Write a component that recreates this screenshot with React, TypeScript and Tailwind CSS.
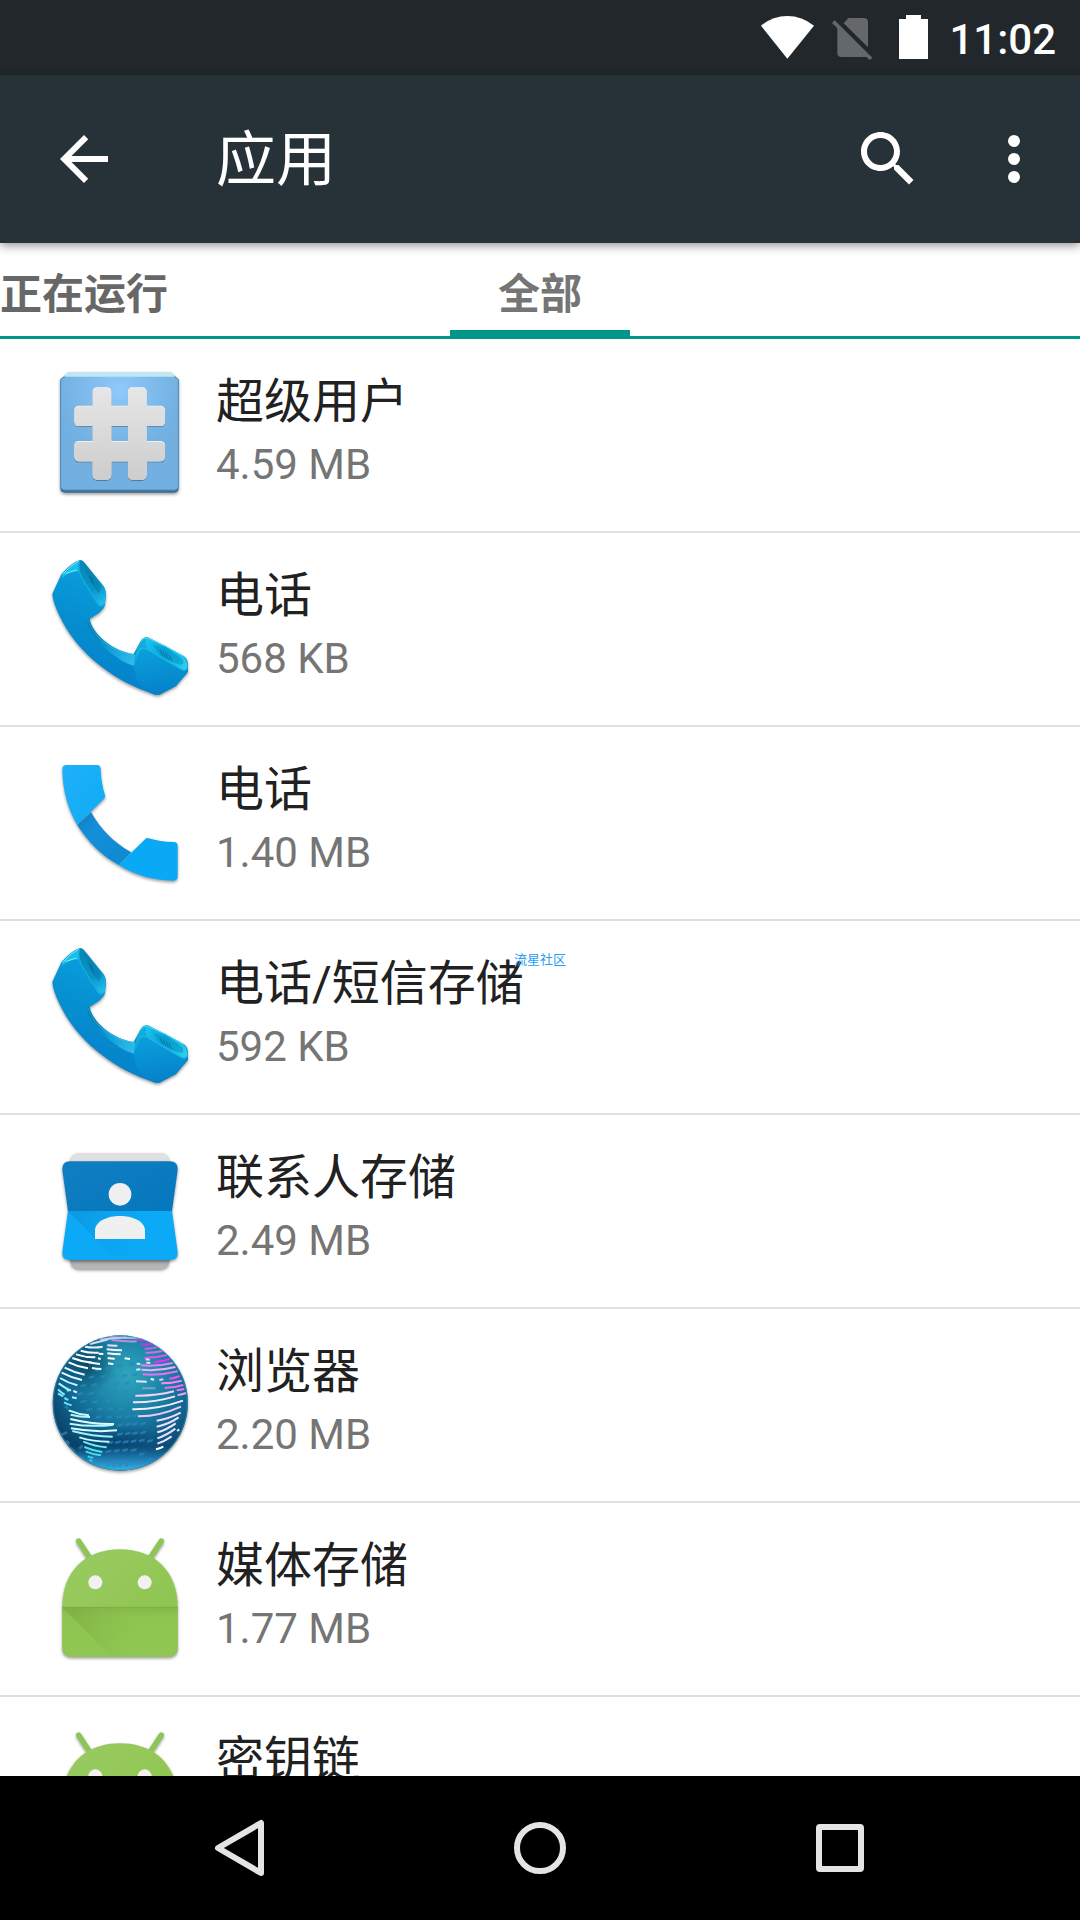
import type { ReactNode } from 'react';

function AppIcon({ top, children }: { top: number; children: ReactNode }) {
  return (
    <svg viewBox={`24 ${top} 432 432`} className="size-36 shrink-0 overflow-visible" aria-hidden="true">
      {children}
    </svg>
  );
}

function Shadow({ id }: { id: string }) {
  return (
    <filter id={id} x="-10%" y="-10%" width="120%" height="125%" colorInterpolationFilters="sRGB">
      <feDropShadow dx="0" dy="5" stdDeviation="4" floodOpacity="0.4" />
    </filter>
  );
}

const HASH =
  'M172 112h28q14 0 14 14v41h50v-41q0-14 14-14h28q14 0 14 14v41h41q14 0 14 14v32q0 14-14 14h-41v46h41q14 0 14 14v32q0 14-14 14h-41v41q0 14-14 14h-28q-14 0-14-14v-41h-50v41q0 14-14 14h-28q-14 0-14-14v-41h-41q-14 0-14-14v-32q0-14 14-14h41v-46h-41q-14 0-14-14v-32q0-14 14-14h41v-41q0-14 14-14zM214 227v46h50v-46z';

function SuperuserIcon() {
  return (
    <AppIcon top={39}>
      <defs>
        <Shadow id="suShadow" />
        <radialGradient id="suBg" gradientUnits="userSpaceOnUse" cx="240" cy="120" r="190">
          <stop offset="0" stopColor="#8fc8fa" />
          <stop offset="1" stopColor="#71b0e0" />
        </radialGradient>
        <linearGradient id="suHash" x1="0" y1="0" x2="0" y2="1">
          <stop offset="0" stopColor="#e6e6e6" />
          <stop offset="1" stopColor="#cdcdcd" />
        </linearGradient>
      </defs>
      <g filter="url(#suShadow)">
        <path d="M88 66h302l26 22v326q0 14-14 14H76q-15 0-15-14V88z" fill="#3f6d92" />
        <path d="M61 88l20-10h316l19 10v318q0 14-14 14H76q-15 0-15-14z" fill="url(#suBg)" />
        <path d="M88 66h302q6 0 16 14H72q10-14 16-14z" fill="#c1e6f2" />
        <path d="M62 88v318q0 14 14 14h325q14 0 14-14V88" fill="none" stroke="#568db8" strokeWidth="3" />
      </g>
      <path d={HASH} fill="#3c6c94" fillRule="evenodd" transform="translate(0 4)" />
      <path d={HASH} fill="#f8f8f8" fillRule="evenodd" />
      <path d={HASH} fill="url(#suHash)" fillRule="evenodd" transform="translate(0 2)" />
    </AppIcon>
  );
}

function HandsetIcon() {
  return (
    <AppIcon top={21}>
      <defs>
        <Shadow id="hsShadow" />
        <linearGradient id="hsBody" gradientUnits="userSpaceOnUse" x1="210" y1="90" x2="120" y2="350">
          <stop offset="0" stopColor="#0a9ddb" />
          <stop offset="0.5" stopColor="#058fd0" />
          <stop offset="1" stopColor="#0583cb" />
        </linearGradient>
        <linearGradient id="hsNeck" gradientUnits="userSpaceOnUse" x1="145" y1="215" x2="290" y2="340">
          <stop offset="0" stopColor="#04668e" />
          <stop offset="0.5" stopColor="#0f9fd6" />
          <stop offset="1" stopColor="#3accf2" />
        </linearGradient>
        <linearGradient id="hsTop" gradientUnits="userSpaceOnUse" x1="115" y1="50" x2="190" y2="160">
          <stop offset="0" stopColor="#0788b7" />
          <stop offset="0.6" stopColor="#0795c8" />
          <stop offset="1" stopColor="#1fbdec" />
        </linearGradient>
        <linearGradient id="hsEnd" gradientUnits="userSpaceOnUse" x1="310" y1="280" x2="440" y2="350">
          <stop offset="0" stopColor="#1cc6ee" />
          <stop offset="0.45" stopColor="#07a5d8" />
          <stop offset="1" stopColor="#2bd0f0" />
        </linearGradient>
        <linearGradient id="hsMouth" gradientUnits="userSpaceOnUse" x1="340" y1="300" x2="360" y2="430">
          <stop offset="0" stopColor="#0a9edb" />
          <stop offset="1" stopColor="#0582ca" />
        </linearGradient>
      </defs>
      <path
        d="M37 131L64 73Q92 39 119 30Q128 29 134 39L187 104Q198 117 198 134L195 165Q193 174 178 188L149 207C160 258 225 305 281 312L303 272Q312 259 327 263L430 317Q441 324 443 336L444 366L408 408L358 434Q349 436 338 431C230 397 130 320 78 234C55 194 38 156 37 131z"
        fill="url(#hsBody)"
        filter="url(#hsShadow)"
      />
      <path d="M145 206C160 260 225 305 283 313Q290 325 282 347C235 335 160 275 142 215z" fill="url(#hsNeck)" opacity=".85" />
      <path d="M144 210C158 262 220 308 283 313" fill="none" stroke="#4bd4f2" strokeWidth="2" opacity=".7" />
      <path d="M119 32Q128 29 134 39L187 104Q198 117 198 134L194 161Q188 173 174 163L130 89Q114 55 119 32z" fill="url(#hsTop)" />
      <path d="M128 42Q148 57 182 107Q184 126 175 130Q151 104 128 42z" fill="#077aaa" opacity=".55" />
      <path d="M148 76l8 12M151 84l8 12M154 92l8 12" stroke="#045a80" strokeWidth="2" />
      <path d="M68 73Q91 45 116 33Q113 46 119 65Q92 61 65 84z" fill="#19bfe9" />
      <path d="M69 72Q92 44 117 33M109 60L78 70" stroke="#7ceaff" strokeWidth="3" fill="none" strokeLinecap="round" />
      <path d="M118 36Q110 61 131 92L174 163Q183 173 193 163" fill="none" stroke="#14ade2" strokeWidth="4" />
      <path d="M282 347L305 292Q313 281 326 290L437 357Q440 367 408 408L358 434Q349 436 338 431C310 422 285 393 282 347z" fill="url(#hsMouth)" />
      <path d="M281 347Q280 315 303 272Q312 259 327 264Q330 275 319 286Q305 291 297 312z" fill="#10aedb" />
      <path d="M318 267Q330 259 430 319Q442 326 442 355Q435 368 417 354L326 300Q313 291 318 267z" fill="url(#hsEnd)" />
      <path d="M339 284Q392 299 426 327Q436 344 421 344Q365 331 339 284z" fill="#0796c6" opacity=".6" />
      <path d="M360 299l8 20M369 304l8 20M378 309l8 20M387 314l8 18" stroke="#0579a6" strokeWidth="3" />
      <path d="M303 275Q312 260 326 266Q377 286 430 319" fill="none" stroke="#4be2f8" strokeWidth="3" />
      <path d="M299 300Q307 290 321 297L417 354Q433 365 440 355" fill="none" stroke="#1cb9e8" strokeWidth="4" />
    </AppIcon>
  );
}

function DialerIcon() {
  return (
    <AppIcon top={18}>
      <defs>
        <Shadow id="dlShadow" />
        <linearGradient id="dlTop" x1="0" y1="0" x2="1" y2="1">
          <stop offset="0" stopColor="#1fb0f8" />
          <stop offset="1" stopColor="#10abf6" />
        </linearGradient>
        <linearGradient id="dlMid" x1="0" y1="0" x2="1" y2="1">
          <stop offset="0" stopColor="#1479bb" />
          <stop offset="0.3" stopColor="#148fd9" />
          <stop offset="1" stopColor="#0e88d0" />
        </linearGradient>
      </defs>
      <g filter="url(#dlShadow)">
        <path d="M153 201C180 250 220 292 274 322L236 360C186 333 142 289 112 240z" fill="url(#dlMid)" />
        <path d="M79 60h91q12 0 12 12q1 41 13 79q2 5-3 10L112 240Q68 166 67 72q0-12 12-12z" fill="url(#dlTop)" />
        <path d="M236 360L316 282q4-4 10-2q35 11 75 11q12 0 12 12v91q0 13-13 13Q310 406 236 360z" fill="#09a9f6" />
      </g>
    </AppIcon>
  );
}

function ContactsIcon() {
  return (
    <AppIcon top={27}>
      <defs>
        <Shadow id="ctShadow" />
        <linearGradient id="ctTop" x1="0" y1="0" x2="1" y2="1">
          <stop offset="0" stopColor="#117ec3" />
          <stop offset="1" stopColor="#0577bd" />
        </linearGradient>
        <linearGradient id="ctFold" gradientUnits="userSpaceOnUse" x1="90" y1="243" x2="330" y2="350">
          <stop offset="0" stopColor="#0c97df" />
          <stop offset="1" stopColor="#0ba9f6" stopOpacity="0" />
        </linearGradient>
        <linearGradient id="ctBack" x1="0" y1="0" x2="0" y2="1">
          <stop offset="0.5" stopColor="#e1e1e1" />
          <stop offset="0.9" stopColor="#a6a6a6" />
          <stop offset="1" stopColor="#b9b9b9" />
        </linearGradient>
      </defs>
      <rect x="91" y="69" width="297" height="347" rx="24" fill="url(#ctBack)" filter="url(#ctShadow)" />
      <g filter="url(#ctShadow)">
        <path d="M90 94H390q25 0 23 26L396 243H84L67 120q-2-26 23-26z" fill="url(#ctTop)" />
        <path d="M84 243H396L413 366q2 24-23 24H90q-25 0-23-24z" fill="#0ba9f6" />
      </g>
      <path d="M84 243H396V390H230z" fill="url(#ctFold)" />
      <g fill="#f0f0f0">
        <circle cx="240" cy="193" r="34" />
        <path d="M165 327V299C172 244 308 244 315 299V327z" />
      </g>
    </AppIcon>
  );
}

// x1, y1, x2, y2, sag, stroke colour
type Stripe = [number, number, number, number, number, string];

const STRIPES: Stripe[] = [
  [150, 72, 205, 58, 1, '#d9dcf4'], [180, 57, 260, 52, 2, '#d6c9ef'], [205, 50, 300, 54, 2, '#cdb5ea'],
  [215, 60, 290, 64, 3, '#b98fdd'], [135, 80, 188, 80, 5, '#e6f0fa'], [122, 92, 176, 98, 5, '#f4f7fc'],
  [108, 103, 166, 112, 5, '#fff'], [97, 114, 156, 128, 5, '#fff'], [86, 127, 144, 145, 5, '#fff'],
  [74, 143, 134, 164, 5, '#e8fbff'], [65, 158, 126, 180, 5, '#dffaff'], [60, 174, 112, 196, 5, '#c8f8ff'],
  [56, 190, 93, 212, 3, '#a9f5fb'], [54, 208, 74, 224, 2, '#8cf1f7'], [54, 220, 70, 229, 1, '#6aeaf2'],
  [202, 76, 232, 77, 1, '#eedcf7'], [200, 88, 246, 91, 1, '#f8edfb'], [202, 100, 242, 103, 1, '#fff'],
  [203, 114, 224, 116, 1, '#fff'], [204, 130, 220, 132, 1, '#fff'], [254, 115, 270, 117, 0, '#fff'],
  [176, 101, 190, 102, 0, '#fff'], [174, 115, 182, 117, 0, '#fff'], [146, 127, 180, 132, 1, '#f5fbff'],
  [156, 144, 184, 147, 1, '#e8fbff'], [80, 206, 86, 214, 0, '#8cf1f7'], [100, 213, 111, 217, 0, '#e8fbff'],
  [73, 234, 85, 240, 0, '#65e7f0'], [96, 232, 110, 235, 0, '#a9f5fb'], [72, 247, 95, 256, 1, '#65e7f0'],
  [86, 271, 147, 286, 5, '#c8f8ff'], [92, 284, 150, 291, 4, '#b6f5fa'], [91, 297, 222, 312, 9, '#dffbfe'],
  [89, 311, 220, 314, 10, '#b9f8fc'], [93, 325, 231, 331, 10, '#dffbfe'], [97, 333, 218, 350, 8, '#9bf4fa'],
  [118, 352, 208, 365, 7, '#c3fafd'], [130, 365, 200, 382, 6, '#70edf4'], [133, 381, 187, 396, 4, '#4ae2ed'],
  [137, 394, 183, 406, 4, '#47dbe9'], [143, 409, 160, 413, 2, '#39d1e2'], [148, 420, 157, 423, 0, '#32c8db'],
  [290, 58, 316, 61, 2, '#e32be8'], [303, 73, 343, 69, 4, '#ed20ef'], [314, 86, 357, 80, 4, '#df55ea'],
  [317, 98, 370, 92, 4, '#d66be6'], [313, 114, 381, 105, 4, '#ee4cf1'], [343, 127, 389, 117, 3, '#fb27f7'],
  [303, 136, 398, 129, 8, '#ef7cf4'], [304, 149, 406, 141, 9, '#edaff7'], [308, 163, 413, 154, 9, '#f06bf3'],
  [288, 184, 320, 185, 0, '#e8e4fb'], [332, 177, 342, 179, 0, '#fff'], [358, 180, 370, 178, 0, '#f3c6f8'],
  [388, 176, 419, 168, 3, '#f64bf4'], [364, 190, 425, 182, 4, '#ee8af4'], [306, 205, 346, 205, 0, '#7b9fd1'],
  [374, 204, 430, 195, 4, '#f06df2'], [317, 118, 329, 119, 0, '#e8dcf9'], [290, 131, 301, 132, 0, '#dfe8fb'],
  [289, 149, 301, 148, 0, '#dfe8fb'], [319, 128, 331, 129, 0, '#f3d8fa'], [286, 227, 402, 214, 8, '#f0d2f9'],
  [279, 247, 405, 229, 10, '#f3e6fc'], [410, 211, 433, 207, 1, '#ef72f2'], [277, 268, 429, 242, 14, '#f6ebfd'],
  [294, 289, 423, 260, 15, '#eccaf8'], [350, 302, 422, 278, 7, '#f3dcfb'], [350, 320, 416, 292, 8, '#efdffb'],
  [352, 337, 407, 310, 6, '#f3e6fc'], [352, 355, 406, 326, 6, '#e9dcf8'], [352, 371, 395, 349, 4, '#e9dcf8'],
  [348, 388, 370, 380, 2, '#fff'], [413, 226, 438, 219, 1, '#e6a8f2'], [411, 333, 418, 328, 0, '#e9dcf8'],
];

// faint ocean cells: x, y
const CELLS = [
  [190, 170], [220, 169], [253, 168], [283, 164], [155, 172], [176, 150], [205, 145], [240, 138], [275, 133],
  [130, 197], [163, 195], [196, 193], [229, 192], [262, 190], [120, 222], [154, 221], [188, 219], [222, 217],
  [256, 216], [130, 245], [164, 246], [205, 243], [238, 242], [271, 241], [148, 269], [180, 268], [212, 267],
  [244, 266], [175, 292], [207, 292], [238, 291], [263, 290], [286, 288], [240, 316], [263, 314], [285, 312],
  [310, 311], [240, 343], [263, 341], [285, 340], [309, 338], [211, 368], [234, 367], [257, 366], [281, 364],
  [305, 362], [330, 363], [205, 395], [230, 393], [255, 391], [281, 391], [305, 403], [253, 93], [285, 92],
];

function GlobeIcon() {
  return (
    <AppIcon top={39}>
      <defs>
        <Shadow id="glShadow" />
        <radialGradient id="glSea" gradientUnits="userSpaceOnUse" cx="265" cy="165" r="260">
          <stop offset="0" stopColor="#2ea6bd" />
          <stop offset="0.4" stopColor="#1b86a8" />
          <stop offset="0.75" stopColor="#10628f" />
          <stop offset="1" stopColor="#0a4468" />
        </radialGradient>
        <linearGradient id="glGlow" x1="0" y1="0" x2="0" y2="1">
          <stop offset="0.82" stopColor="#1b7cb4" stopOpacity="0" />
          <stop offset="0.92" stopColor="#2388c0" stopOpacity="0.9" />
          <stop offset="1" stopColor="#35b4e4" />
        </linearGradient>
        <radialGradient id="glDark" gradientUnits="userSpaceOnUse" cx="235" cy="370" r="150" gradientTransform="translate(0 235) scale(1 .35)">
          <stop offset="0" stopColor="#03355a" stopOpacity="0.6" />
          <stop offset="1" stopColor="#03355a" stopOpacity="0" />
        </radialGradient>
        <radialGradient id="glNorth" gradientUnits="userSpaceOnUse" cx="140" cy="130" r="90">
          <stop offset="0" stopColor="#04334f" stopOpacity="0.7" />
          <stop offset="1" stopColor="#04334f" stopOpacity="0" />
        </radialGradient>
        <clipPath id="glClip">
          <circle cx="241" cy="249" r="203" />
        </clipPath>
      </defs>
      <circle cx="241" cy="249" r="203" fill="url(#glSea)" filter="url(#glShadow)" />
      <g clipPath="url(#glClip)">
        <rect x="38" y="46" width="406" height="406" fill="url(#glNorth)" />
        <rect x="38" y="46" width="406" height="406" fill="url(#glDark)" />
        <rect x="38" y="46" width="406" height="406" fill="url(#glGlow)" />
        {CELLS.map(([x, y]) => (
          <path key={`${x}-${y}`} d={`M${x - 7} ${y - 3}l17-3l-3 8l-17 3z`} fill="#2e86bd" opacity=".75" />
        ))}
        <path d="M62 345l20-8M78 362l10 10M92 384l10 10M118 386l10-10M205 428v10M222 426v16M240 424v18M260 426v14M298 422v10M330 414l4 10M120 410l12 8M75 258l10 8" stroke="#2e86bd" strokeWidth="8" opacity=".7" />
        {STRIPES.map(([x1, y1, x2, y2, sag, color], i) => (
          <path
            key={i}
            d={`M${x1} ${y1}Q${(x1 + x2) / 2} ${(y1 + y2) / 2 + sag} ${x2} ${y2}`}
            fill="none"
            stroke={color}
            strokeWidth="6"
          />
        ))}
        <circle cx="241" cy="249" r="201" fill="none" stroke="#2b91bd" strokeWidth="4" opacity=".55" />
      </g>
    </AppIcon>
  );
}

function AndroidIcon() {
  return (
    <AppIcon top={21}>
      <defs>
        <Shadow id="anShadow" />
        <linearGradient id="anHead" x1="0" y1="0" x2="1" y2="1">
          <stop offset="0.2" stopColor="#97ca5e" />
          <stop offset="1" stopColor="#8bc34a" />
        </linearGradient>
        <linearGradient id="anBody" x1="0" y1="0" x2="0" y2="1">
          <stop offset="0" stopColor="#84b849" />
          <stop offset="0.2" stopColor="#8dc550" />
          <stop offset="1" stopColor="#8fc752" />
        </linearGradient>
        <linearGradient id="anFold" gradientUnits="userSpaceOnUse" x1="68" y1="262" x2="300" y2="360">
          <stop offset="0" stopColor="#7dae45" />
          <stop offset="1" stopColor="#8cc34e" stopOpacity="0" />
        </linearGradient>
      </defs>
      <g filter="url(#anShadow)">
        <path d="M116 63L152 118M364 63L328 118" stroke="#8ec655" strokeWidth="16" strokeLinecap="round" />
        <path d="M67 262C67 150 140 88 240 88S413 150 413 262V385Q413 410 388 410H92Q67 410 67 385z" fill="url(#anHead)" />
      </g>
      <path d="M67 262H413V385Q413 410 388 410H92Q67 410 67 385z" fill="url(#anBody)" />
      <path d="M67 262H413V410H215z" fill="url(#anFold)" />
      <path d="M67 262H413" stroke="#79a744" strokeWidth="2" />
      <circle cx="166" cy="187" r="21" fill="#f1f1f1" />
      <circle cx="314" cy="187" r="21" fill="#f1f1f1" />
    </AppIcon>
  );
}

const apps = [
  { name: '超级用户', size: '4.59 MB', Icon: SuperuserIcon },
  { name: '电话', size: '568 KB', Icon: HandsetIcon },
  { name: '电话', size: '1.40 MB', Icon: DialerIcon },
  { name: '电话/短信存储', size: '592 KB', Icon: HandsetIcon },
  { name: '联系人存储', size: '2.49 MB', Icon: ContactsIcon },
  { name: '浏览器', size: '2.20 MB', Icon: GlobeIcon },
  { name: '媒体存储', size: '1.77 MB', Icon: AndroidIcon },
  { name: '密钥链', size: '', Icon: AndroidIcon },
];

function StatusBar() {
  return (
    <div className="flex h-[75px] shrink-0 items-center justify-end gap-[18px] bg-[#22272b] pr-6 text-white">
      <svg viewBox="63 36 159 153" className="h-[51px] w-[53px]" fill="currentColor" aria-hidden="true">
        <path d="M63 77Q98 48 142 48T222 77L142 176z" />
      </svg>
      <svg viewBox="276 36 147 153" className="h-[51px] w-[49px]" fill="#64686b" aria-hidden="true">
        <path d="M325 54H371Q384 54 384 67V142L311 70zM292 79L383 169L378 171H305Q292 171 292 158z" />
        <path d="M284 61L397 173L389 180L276 69z" />
      </svg>
      <svg viewBox="477 36 96 153" className="h-[51px] w-8" fill="currentColor" aria-hidden="true">
        <path d="M498 45H543V57H564V177H477V57H498z" />
      </svg>
      <span className="pt-1 text-[42px] leading-[48px] font-medium">11:02</span>
    </div>
  );
}

function Header() {
  return (
    <header className="relative z-10 flex h-[168px] shrink-0 items-center bg-[#263238] pr-[30px] pl-12 text-white shadow-[0_3px_9px_rgba(0,0,0,0.4)]">
      <button aria-label="返回">
        <svg viewBox="0 0 24 24" className="size-[72px]" fill="currentColor" aria-hidden="true">
          <path d="M20 11H7.830l5.590-5.590L12 4l-8 8 8 8 1.410-1.410L7.830 13H20v-2z" />
        </svg>
      </button>
      <h1 className="ml-24 flex-1 pt-1 text-[60px] leading-[72px]">应用</h1>
      <button aria-label="搜索">
        <svg viewBox="0 0 24 24" className="size-[72px]" fill="currentColor" aria-hidden="true">
          <path d="M15.500 14h-.79l-.28-.27C15.410 12.590 16 11.110 16 9.500 16 5.910 13.090 3 9.500 3S3 5.910 3 9.500 5.910 16 9.500 16c1.610 0 3.090-.59 4.230-1.570l.27.28v.79l5 4.990L20.490 19l-4.990-5zm-6 0C7.010 14 5 11.990 5 9.500S7.010 5 9.500 5 14 7.010 14 9.500 11.990 14 9.500 14z" />
        </svg>
      </button>
      <button aria-label="更多选项" className="ml-[54px]">
        <svg viewBox="0 0 24 24" className="size-[72px]" fill="currentColor" aria-hidden="true">
          <circle cx="12" cy="6" r="2" />
          <circle cx="12" cy="12" r="2" />
          <circle cx="12" cy="18" r="2" />
        </svg>
      </button>
    </header>
  );
}

function Tabs() {
  return (
    <div role="tablist" className="grid h-24 shrink-0 grid-cols-[1fr_180px_1fr] border-b-[3px] border-[#009688] text-[42px] leading-[48px] font-bold">
      <button role="tab" aria-selected="false" className="border-b-[6px] border-transparent pt-4 text-left text-[#676767]">
        正在运行
      </button>
      <button role="tab" aria-selected="true" className="border-b-[6px] border-[#009688] pt-4 text-[#757575]">
        全部
      </button>
    </div>
  );
}

function NavBar() {
  return (
    <nav className="h-36 shrink-0 bg-black px-[90px]">
      <div className="grid h-full grid-cols-3">
        <button aria-label="返回" className="flex items-center justify-center">
          <svg viewBox="0 0 60 60" className="size-[60px]" fill="none" stroke="#e4e4e4" strokeWidth="6" strokeLinejoin="round" aria-hidden="true">
            <path d="M51 5V55L8 30z" />
          </svg>
        </button>
        <button aria-label="主屏幕" className="flex items-center justify-center">
          <svg viewBox="0 0 60 60" className="size-[60px]" fill="none" stroke="#e4e4e4" strokeWidth="6" aria-hidden="true">
            <circle cx="30" cy="30" r="23" />
          </svg>
        </button>
        <button aria-label="最近任务" className="flex items-center justify-center">
          <svg viewBox="0 0 60 60" className="size-[60px]" fill="none" stroke="#e4e4e4" strokeWidth="6" strokeLinejoin="round" aria-hidden="true">
            <rect x="9" y="9" width="42" height="42" rx="1" />
          </svg>
        </button>
      </div>
    </nav>
  );
}

export default function App() {
  return (
    <div lang="zh-CN" className="relative flex h-screen flex-col bg-white font-['Roboto','Noto_Sans_CJK_SC',sans-serif]">
      <StatusBar />
      <Header />
      <Tabs />
      <ul className="min-h-0 flex-1 overflow-y-auto [scrollbar-width:none]">
        {apps.map(({ name, size, Icon }, i) => (
          <li key={i} className="flex items-center gap-6 border-b-2 border-[#e0e0e0] px-12 py-6">
            <Icon />
            <div className="pb-1.5">
              <p className="text-5xl leading-[66px] text-[#212121]">{name}</p>
              <p className="min-h-[60px] text-[42px] leading-[60px] text-[#757575]">{size}</p>
            </div>
          </li>
        ))}
      </ul>
      <NavBar />
      <div className="pointer-events-none absolute inset-0 flex items-center justify-center">
        <span className="text-[13px] leading-4 text-[#2b9df0]">流星社区</span>
      </div>
    </div>
  );
}
